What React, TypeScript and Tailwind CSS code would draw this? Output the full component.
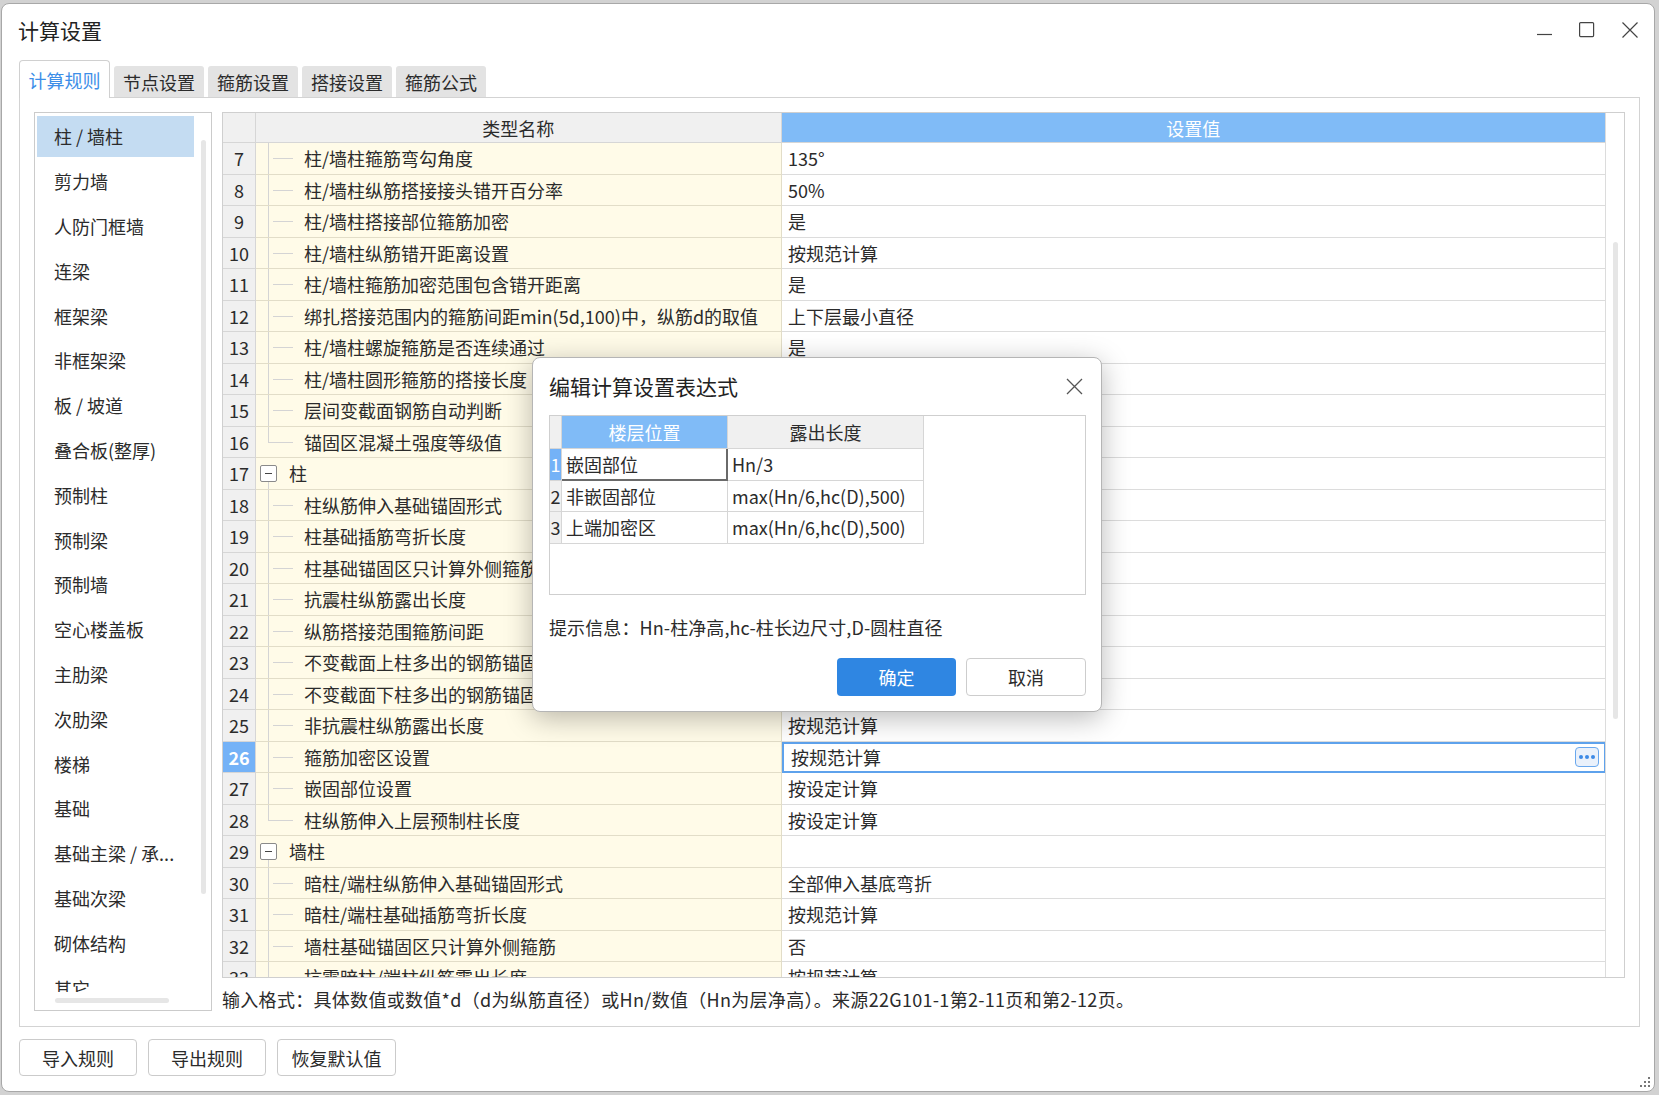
import React from 'react'

const categories = [
  '柱 / 墙柱', '剪力墙', '人防门框墙', '连梁', '框架梁', '非框架梁', '板 / 坡道', '叠合板(整厚)',
  '预制柱', '预制梁', '预制墙', '空心楼盖板', '主肋梁', '次肋梁', '楼梯', '基础',
  '基础主梁 / 承...', '基础次梁', '砌体结构', '其它',
]

type RowData = { n: number; name: string; value: string; kind?: 'group' | 'last' }

const rows: RowData[] = [
  { n: 7, name: '柱/墙柱箍筋弯勾角度', value: '135°' },
  { n: 8, name: '柱/墙柱纵筋搭接接头错开百分率', value: '50%' },
  { n: 9, name: '柱/墙柱搭接部位箍筋加密', value: '是' },
  { n: 10, name: '柱/墙柱纵筋错开距离设置', value: '按规范计算' },
  { n: 11, name: '柱/墙柱箍筋加密范围包含错开距离', value: '是' },
  { n: 12, name: '绑扎搭接范围内的箍筋间距min(5d,100)中，纵筋d的取值', value: '上下层最小直径' },
  { n: 13, name: '柱/墙柱螺旋箍筋是否连续通过', value: '是' },
  { n: 14, name: '柱/墙柱圆形箍筋的搭接长度', value: 'max(lae,300)' },
  { n: 15, name: '层间变截面钢筋自动判断', value: '是' },
  { n: 16, name: '锚固区混凝土强度等级值', value: '取自身混凝土强度等级', kind: 'last' },
  { n: 17, name: '柱', value: '', kind: 'group' },
  { n: 18, name: '柱纵筋伸入基础锚固形式', value: '全部伸入基底弯折' },
  { n: 19, name: '柱基础插筋弯折长度', value: '按规范计算' },
  { n: 20, name: '柱基础锚固区只计算外侧箍筋', value: '否' },
  { n: 21, name: '抗震柱纵筋露出长度', value: '按规范计算' },
  { n: 22, name: '纵筋搭接范围箍筋间距', value: 'min(5*d,100)' },
  { n: 23, name: '不变截面上柱多出的钢筋锚固', value: '1.2*Lae' },
  { n: 24, name: '不变截面下柱多出的钢筋锚固', value: '1.2*Lae' },
  { n: 25, name: '非抗震柱纵筋露出长度', value: '按规范计算' },
  { n: 26, name: '箍筋加密区设置', value: '按规范计算' },
  { n: 27, name: '嵌固部位设置', value: '按设定计算' },
  { n: 28, name: '柱纵筋伸入上层预制柱长度', value: '按设定计算', kind: 'last' },
  { n: 29, name: '墙柱', value: '', kind: 'group' },
  { n: 30, name: '暗柱/端柱纵筋伸入基础锚固形式', value: '全部伸入基底弯折' },
  { n: 31, name: '暗柱/端柱基础插筋弯折长度', value: '按规范计算' },
  { n: 32, name: '墙柱基础锚固区只计算外侧箍筋', value: '否' },
  { n: 33, name: '抗震暗柱/端柱纵筋露出长度', value: '按规范计算' },
]

const tabs = ['计算规则', '节点设置', '箍筋设置', '搭接设置', '箍筋公式']

function TreeCell({ r }: { r: RowData }) {
  if (r.kind === 'group') {
    return (
      <div className="relative flex h-full items-center">
        <span className="absolute left-[12px] top-[24px] bottom-0 w-px bg-[#d4d4d4]" />
        <span className="ml-[4px] flex h-[17px] w-[17px] items-center justify-center rounded-[2px] border border-[#8a8a8a] bg-white">
          <span className="h-px w-[7px] bg-[#444]" />
        </span>
        <span className="ml-[12px]">{r.name}</span>
      </div>
    )
  }
  return (
    <div className="relative flex h-full items-center">
      <span className={`absolute left-[12px] top-0 w-px bg-[#d4d4d4] ${r.kind === 'last' ? 'h-1/2' : 'h-full'}`} />
      <span className={`absolute top-1/2 h-px bg-[#d4d4d4] ${r.kind === 'last' ? 'left-[12px] w-[25px]' : 'left-[17px] w-[20px]'}`} />
      <span className="pl-[48px] whitespace-nowrap">{r.name}</span>
    </div>
  )
}

function GridRow({ r }: { r: RowData }) {
  const sel = r.n === 26
  return (
    <div className="flex h-[31.5px] shrink-0">
      <div
        className={`flex w-[33px] shrink-0 items-center justify-center border-r border-b border-[#d6d6d6] ${
          sel ? 'bg-[#74b2f7] font-bold text-white' : 'bg-[#f0f0f0]'
        }`}
      >
        {r.n}
      </div>
      <div className="w-[526px] shrink-0 border-r border-b border-[#e2ddc8] bg-[#fffbe8]">
        <TreeCell r={r} />
      </div>
      {sel ? (
        <div className="flex w-[824px] shrink-0 items-center justify-between border-2 border-[#5ea2ec] bg-white pl-[7px] pr-[5px]">
          <span>{r.value}</span>
          <span className="flex h-[20px] w-[24px] items-center justify-center gap-[2px] rounded-[4px] border border-[#6aa8ee] bg-[#eaf1fb]">
            <span className="h-[4px] w-[4px] rounded-full bg-[#3d8ae6]" />
            <span className="h-[4px] w-[4px] rounded-full bg-[#3d8ae6]" />
            <span className="h-[4px] w-[4px] rounded-full bg-[#3d8ae6]" />
          </span>
        </div>
      ) : (
        <div className="flex w-[824px] shrink-0 items-center border-b border-[#dcdcdc] bg-white pl-[6px]">
          {r.value}
        </div>
      )}
    </div>
  )
}

function ExprDialog() {
  const drows = [
    { n: 1, a: '嵌固部位', b: 'Hn/3' },
    { n: 2, a: '非嵌固部位', b: 'max(Hn/6,hc(D),500)' },
    { n: 3, a: '上端加密区', b: 'max(Hn/6,hc(D),500)' },
  ]
  return (
    <div className="absolute left-[532px] top-[357px] flex h-[355px] w-[570px] flex-col rounded-[8px] border border-[#b5b5b5] bg-white shadow-[0_6px_28px_rgba(0,0,0,0.28)]">
      <div className="flex h-[56px] shrink-0 items-center justify-between pl-[16px] pr-[18px]">
        <span className="text-[21px] text-[#222]">编辑计算设置表达式</span>
        <svg width="17" height="17" viewBox="0 0 17 17" className="text-[#555]">
          <path d="M1 1 L16 16 M16 1 L1 16" stroke="currentColor" strokeWidth="1.3" fill="none" />
        </svg>
      </div>
      <div className="ml-[16px] mt-[1px] h-[180px] w-[537px] border border-[#cfcfcf] bg-white">
        <div className="flex h-[33px]">
          <div className="w-[12px] border-r border-b border-[#d6d6d6] bg-[#f0f0f0]" />
          <div className="flex w-[166px] items-center justify-center border-r border-b border-[#d6d6d6] bg-[#80bbf7] text-white">楼层位置</div>
          <div className="flex w-[196px] items-center justify-center border-r border-b border-[#d6d6d6] bg-[#f0f0f0]">露出长度</div>
        </div>
        {drows.map((d) => (
          <div key={d.n} className="flex h-[31.5px]">
            <div
              className={`flex w-[12px] items-center justify-center border-r border-b border-[#d6d6d6] ${
                d.n === 1 ? 'bg-[#74b2f7] text-white' : 'bg-[#f0f0f0]'
              }`}
            >
              {d.n}
            </div>
            <div
              className={`flex w-[166px] items-center pl-[4px] ${
                d.n === 1 ? 'border-r-2 border-b-2 border-[#6a6a6a]' : 'border-r border-b border-[#d6d6d6]'
              }`}
            >
              {d.a}
            </div>
            <div className="flex w-[196px] items-center border-r border-b border-[#d6d6d6] pl-[4px]">{d.b}</div>
          </div>
        ))}
      </div>
      <div className="ml-[16px] mt-[20px] leading-[24px] tracking-[0.1px]">提示信息：Hn-柱净高,hc-柱长边尺寸,D-圆柱直径</div>
      <div className="mt-[19px] flex justify-end gap-[10px] pr-[15px]">
        <button className="h-[38px] w-[119px] rounded-[4px] bg-[#2f86e2] text-white">确定</button>
        <button className="h-[38px] w-[120px] rounded-[4px] border border-[#cdcdcd] bg-white">取消</button>
      </div>
    </div>
  )
}

export default function App() {
  return (
    <div className="relative h-[1095px] w-[1659px] overflow-hidden bg-[#d2d2d2] font-['Noto_Sans_CJK_SC',sans-serif] text-[18px] leading-[24px] text-[#2b2b2b]">
      <div className="ml-[1px] mt-[3px] flex h-[1089px] w-[1654px] flex-col rounded-[8px] border border-[#a8a8a8] bg-white">
        {/* title bar */}
        <div className="flex h-[52px] shrink-0 items-center justify-between pl-[16px]">
          <span className="text-[21px] text-[#222]">计算设置</span>
          <div className="flex h-full items-center">
            <svg width="16" height="16" viewBox="0 0 16 16" className="mr-[26px] text-[#444]">
              <path d="M0 12.5 H15" stroke="currentColor" strokeWidth="1.2" />
            </svg>
            <svg width="16" height="16" viewBox="0 0 16 16" className="mr-[27px] text-[#444]">
              <rect x="0.6" y="0.6" width="14" height="14" rx="1" stroke="currentColor" strokeWidth="1.2" fill="none" />
            </svg>
            <svg width="16" height="16" viewBox="0 0 16 16" className="mr-[16px] text-[#444]">
              <path d="M0.5 0.5 L15.5 15.5 M15.5 0.5 L0.5 15.5" stroke="currentColor" strokeWidth="1.2" fill="none" />
            </svg>
          </div>
        </div>

        {/* tabs */}
        <div className="flex h-[41px] shrink-0 items-end gap-[4px] pl-[17px]">
          {tabs.map((t, i) =>
            i === 0 ? (
              <div
                key={t}
                className="relative z-10 -mb-px flex h-[38px] w-[91px] items-center justify-center rounded-t-[4px] border border-b-0 border-[#d0d0d0] bg-white text-[#3c8ee8]"
              >
                {t}
              </div>
            ) : (
              <div key={t} className="flex h-[31px] w-[90px] items-center justify-center rounded-t-[3px] bg-[#e3e3e3]">
                {t}
              </div>
            )
          )}
        </div>

        {/* panel */}
        <div className="ml-[17px] flex h-[930px] w-[1621px] shrink-0 gap-[10px] border border-[#d3d3d3] pl-[14px] pt-[14px]">
          {/* category list */}
          <div className="relative flex h-[899px] w-[178px] shrink-0 flex-col border border-[#cbcbcb] bg-white">
            <div className="h-[879px] overflow-hidden pl-[2px] pt-[1px]">
              {categories.map((c, i) => (
                <div key={c} className="flex h-[44.8px] items-center">
                  <div
                    className={`flex h-[41px] w-[157px] items-center whitespace-nowrap pl-[17px] ${
                      i === 0 ? 'bg-[#c4dcf2]' : ''
                    }`}
                  >
                    {c}
                  </div>
                </div>
              ))}
            </div>
            <span className="absolute left-[166px] top-[27px] h-[754px] w-[5px] rounded-full bg-[#e6e6e6]" />
            <span className="absolute bottom-[7px] left-[20px] h-[5px] w-[114px] rounded-full bg-[#e6e6e6]" />
          </div>

          {/* grid + hint */}
          <div className="flex w-[1403px] shrink-0 flex-col">
            <div className="flex h-[866px] border border-[#cfcfcf]">
              <div className="flex w-[1383px] flex-col overflow-hidden">
                <div className="flex h-[30px] shrink-0">
                  <div className="w-[33px] border-r border-b border-[#d6d6d6] bg-[#f0f0f0]" />
                  <div className="flex w-[526px] items-center justify-center border-r border-b border-[#d6d6d6] bg-[#f0f0f0]">
                    类型名称
                  </div>
                  <div className="flex w-[824px] items-center justify-center border-b border-[#d6d6d6] bg-[#80bbf7] text-white">
                    设置值
                  </div>
                </div>
                {rows.map((r) => (
                  <GridRow key={r.n} r={r} />
                ))}
              </div>
              <div className="relative w-[19px] border-l border-[#dcdcdc] bg-white">
                <span className="absolute left-[7px] top-[129px] h-[477px] w-[5px] rounded-full bg-[#e6e6e6]" />
              </div>
            </div>
            <div className="mt-[9px] whitespace-nowrap tracking-[0.3px]">
              输入格式：具体数值或数值*d（d为纵筋直径）或Hn/数值（Hn为层净高）。来源22G101-1第2-11页和第2-12页。
            </div>
          </div>
        </div>

        {/* bottom buttons */}
        <div className="ml-[17px] mt-[12px] flex gap-[11px]">
          <button className="h-[37px] w-[118px] rounded-[4px] border border-[#cbcbcb] bg-white">导入规则</button>
          <button className="h-[37px] w-[118px] rounded-[4px] border border-[#cbcbcb] bg-white">导出规则</button>
          <button className="h-[37px] w-[119px] rounded-[4px] border border-[#cbcbcb] bg-white">恢复默认值</button>
        </div>

        <div className="mt-auto flex justify-end pb-[3px] pr-[3px]">
          <svg width="12" height="12" viewBox="0 0 12 12" className="text-[#777]">
            <rect x="9" y="1" width="2" height="2" fill="currentColor" />
            <rect x="5" y="5" width="2" height="2" fill="currentColor" />
            <rect x="9" y="5" width="2" height="2" fill="currentColor" />
            <rect x="1" y="9" width="2" height="2" fill="currentColor" />
            <rect x="5" y="9" width="2" height="2" fill="currentColor" />
            <rect x="9" y="9" width="2" height="2" fill="currentColor" />
          </svg>
        </div>
      </div>

      <ExprDialog />
    </div>
  )
}
